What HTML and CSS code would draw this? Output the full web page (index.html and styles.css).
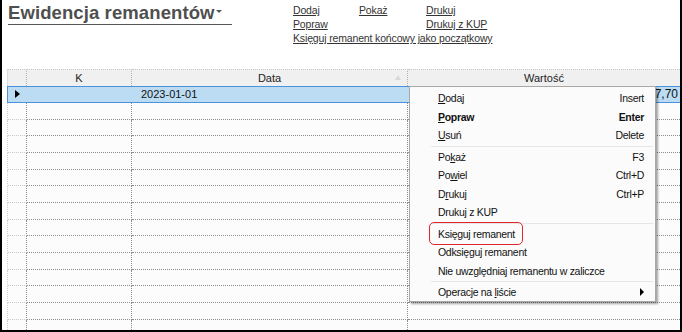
FILE: index.html
```html
<!DOCTYPE html>
<html lang="pl">
<head>
<meta charset="utf-8">
<link rel="stylesheet" href="styles.css">
</head>
<body>
<div class="frame">
  <div class="top">
    <div class="title">Ewidencja remanentów<span class="caret"></span></div>
    <div class="links">
      <a class="l1">Dodaj</a><a class="l2">Pokaż</a><a class="l3">Drukuj</a>
      <a class="l1">Popraw</a><span></span><a class="l3">Drukuj z KUP</a>
      <a class="wide">Księguj remanent końcowy jako początkowy</a>
    </div>
  </div>
  <div class="grid">
    <div class="hd ind"></div><div class="hd c">K</div><div class="hd c sort">Data<span class="tri"></span></div><div class="hd c last">Wartość</div>
    <div class="sel ind"><span class="arrow"></span></div><div class="sel"></div><div class="sel date">2023-01-01</div><div class="sel val last">7,70</div>
  </div>
  <div class="rows" id="rows"></div>
  <div class="menu">
    <div class="it"><span><u>D</u>odaj</span><span>Insert</span></div>
    <div class="it b"><span><u>P</u>opraw</span><span>Enter</span></div>
    <div class="it"><span><u>U</u>suń</span><span>Delete</span></div>
    <div class="sep"></div>
    <div class="it"><span>Po<u>k</u>aż</span><span>F3</span></div>
    <div class="it"><span>Po<u>w</u>iel</span><span>Ctrl+D</span></div>
    <div class="it"><span>D<u>r</u>ukuj</span><span>Ctrl+P</span></div>
    <div class="it"><span>Drukuj z KUP</span><span></span></div>
    <div class="sep"></div>
    <div class="it"><span class="hl">Księguj remanent</span><span></span></div>
    <div class="it"><span>Odksięguj remanent</span><span></span></div>
    <div class="it"><span>Nie uwzględniaj remanentu w zaliczce</span><span></span></div>
    <div class="sep"></div>
    <div class="it"><span>Operacje na <u>l</u>iście</span><span class="sub"></span></div>
  </div>
</div>
<script>
  var r = document.getElementById('rows');
  var h = '';
  for (var i = 0; i < 14; i++) {
    h += '<div class="row"><div class="ind"></div><div></div><div></div><div class="last"></div></div>';
  }
  r.innerHTML = h;
</script>
</body>
</html>
```
FILE: styles.css
```css
* { box-sizing: border-box; }
html, body { margin: 0; padding: 0; background: #fff; }
body { font-family: "Liberation Sans", Arial, sans-serif; }

.frame {
  position: relative;
  width: 682px;
  height: 332px;
  border-left: 2px solid #000;
  border-right: 2px solid #000;
  border-bottom: 2px solid #000;
  overflow: hidden;
}

.top {
  height: 69px;
  display: flex;
  align-items: flex-start;
}

.title {
  margin: 3px 0 0 6px;
  width: 224px;
  font-size: 18.5px;
  font-weight: bold;
  color: #4f4f4f;
  line-height: 20px;
  padding-bottom: 1px;
  border-bottom: 1px solid #555;
  white-space: nowrap;
  letter-spacing: 0.1px;
}
.caret {
  display: inline-block;
  width: 0; height: 0;
  border-left: 3.5px solid transparent;
  border-right: 3.5px solid transparent;
  border-top: 3.5px solid #555;
  vertical-align: 6px;
  margin-left: 1px;
}

.links {
  margin: 3px 0 0 61px;
  display: grid;
  grid-template-columns: 66px 67px auto;
  font-family: "Liberation Sans", Arial, sans-serif;
  font-size: 10.5px;
  line-height: 14px;
  color: #333;
  letter-spacing: -0.15px;
}
.links a { text-decoration: underline; color: #333; }
.links .wide { grid-column: 1 / 4; white-space: nowrap; }

.grid, .row {
  display: grid;
  grid-template-columns: 20px 105px 276px 272px;
  margin-left: 5px;
}
.hd {
  height: 17px;
  background: #f0f0f0;
  border-top: 1px dotted #c8c8c8;
  border-right: 1px dotted #b0b0b0;
  font-size: 11px;
  line-height: 16px;
  color: #222;
}
.hd.ind { border-left: 1px solid #ddd; }
.hd.c { text-align: center; }
.hd.sort { position: relative; }
.tri {
  position: absolute;
  right: 6px; top: 5px;
  width: 0; height: 0;
  border-left: 3px solid transparent;
  border-right: 3px solid transparent;
  border-bottom: 5px solid #d8d8d8;
}
.hd.last { border-right: none; }

.sel {
  height: 17px;
  background: #bcdcf4;
  border-top: 1px solid #4a93dc;
  border-bottom: 1px solid #4a93dc;
  font-size: 11px;
  line-height: 15px;
  color: #111;
}
.sel.ind { border-left: 1px solid #4a93dc; position: relative; }
.arrow {
  position: absolute;
  left: 7px; top: 3px;
  width: 0; height: 0;
  border-top: 4.5px solid transparent;
  border-bottom: 4.5px solid transparent;
  border-left: 5px solid #000;
}
.date { padding-left: 9px; }
.val { text-align: right; padding-right: 2px; font-size: 12px; }

.row > div {
  height: 16.67px;
  border-bottom: 1px dotted #8c8c8c;
  border-right: 1px dotted #8c8c8c;
  background: #fcfcfc;
}
.row > div.ind { border-left: 1px dotted #d0d0d0; border-bottom-color: #c8c8c8; }
.row > div.last { border-right: none; }

.menu {
  position: absolute;
  left: 407px;
  top: 86px;
  width: 247px;
  height: 216px;
  background: #fbfbfb;
  border: 1px solid #a8a8a8;
  box-shadow: 2px 2px 2px rgba(0,0,0,0.35);
  padding: 2px 2px 1px 2px;
  font-size: 10.5px;
  letter-spacing: -0.3px;
  color: #111;
}
.it {
  height: 18.5px;
  display: flex;
  justify-content: space-between;
  align-items: center;
  padding: 0 9px 0 26px;
  position: relative;
}
.it.b { font-weight: bold; }
.sep {
  margin-left: 19px;
  border-top: 1px solid #e6e6e6;
  margin-top: 1px;
  height: 2px;
}
.hl { position: relative; }
.hl::before {
  content: "";
  position: absolute;
  left: -9px;
  right: -8px;
  top: -6px;
  bottom: -5px;
  border: 1.5px solid #e3262b;
  border-radius: 5px;
}
.sub {
  width: 0; height: 0;
  border-top: 4px solid transparent;
  border-bottom: 4px solid transparent;
  border-left: 4px solid #000;
}
```
